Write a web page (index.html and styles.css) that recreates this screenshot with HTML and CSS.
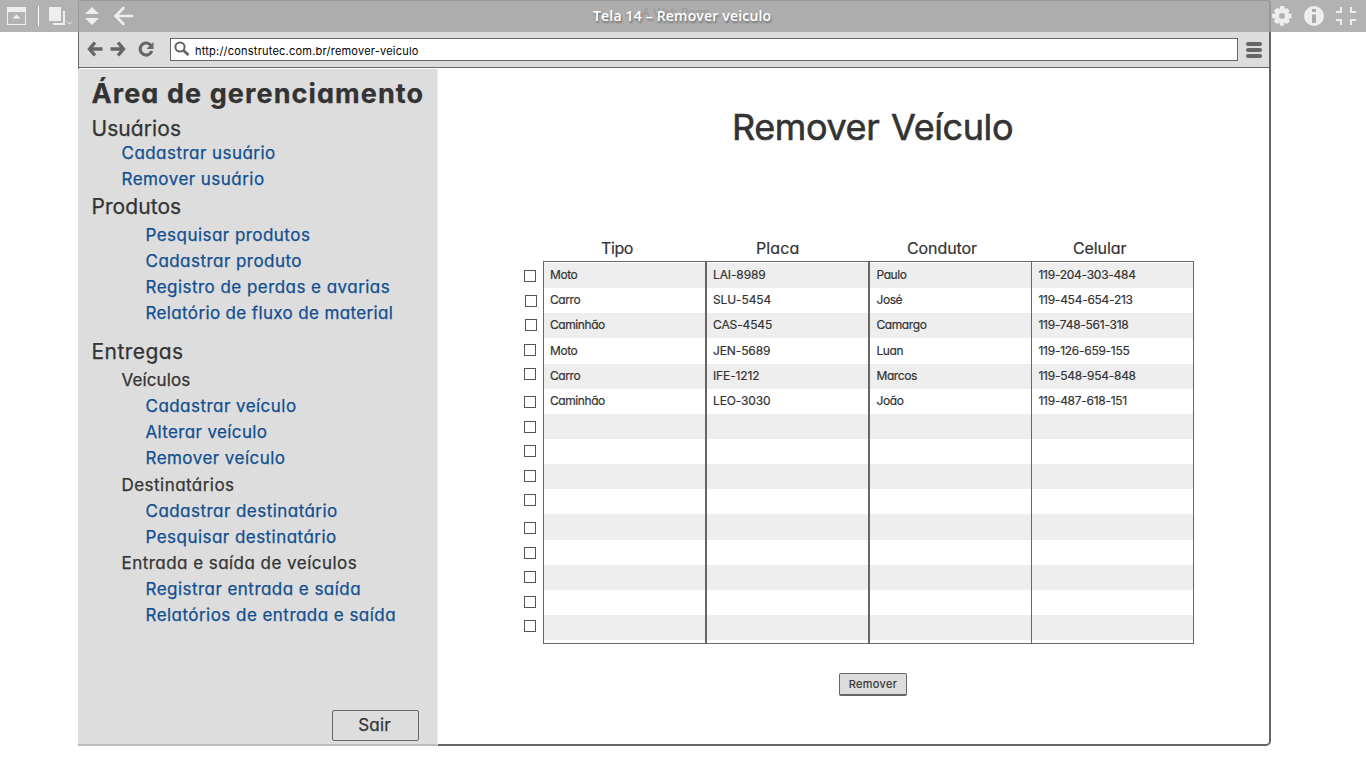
FILE: index.html
```
<!DOCTYPE html>
<html lang="pt-BR">
<head>
<meta charset="utf-8">
<title>Tela 14 – Remover veiculo</title>
<link rel="stylesheet" href="styles.css">
</head>
<body>
<header class="bar">
  <svg class="bar-left" width="140" height="32" viewBox="0 0 140 32" fill="#eee">
    <path d="M7 7h19v18H7zM8 12v12h17V12z" fill-rule="evenodd"/>
    <path d="M16.500 14.500l4 4h-8z"/>
    <path d="M38 6h1v20h-1z" fill="#fff"/>
    <path d="M49 7h12v14H49zM63 11h2v14H53v-2h10z"/>
    <path d="M67 21.500l2.500 2.500 2.500-2.500" fill="none" stroke="#eee"/>
    <path d="M92 7l7 7H85zM92 25l7-7H85z"/>
    <path d="M123.500 8l-8 8 8 8M116 16h16" fill="none" stroke="#eee" stroke-width="2.600" stroke-linecap="round"/>
  </svg>
  <h1 class="bar-title">Tela 14 – Remover veiculo</h1>
  <svg class="bar-right" width="100" height="32" viewBox="1266 0 100 32" fill="#eee">
    <path d="M1280.200 6h4l.6 2.900 2-.9 2.900 2.800-1.600 2.500 3.400.7v4l-3 .7 1.300 2.500-2.800 2.900-2.600-1.700-.7 3.300h-3.500l-.8-3.300-2.600 1.700-2.900-2.900 1.400-2.500-3.100-.7v-4l3.400-.7-1.700-2.500 2.900-2.800 2.800.9zM1282 13a3 3 0 1 0 0 6 3 3 0 0 0 0-6z" fill-rule="evenodd"/>
    <circle cx="1314" cy="16" r="10"/>
    <path d="M1312 9h4v3h-4zM1312 14.500h4V23h-4z" fill="#aaa"/>
    <path d="M1336 11h4V7h2v6h-6zM1350 7h2v4h4v2h-6zM1336 19h6v6h-2v-4h-4zM1350 19h6v2h-4v4h-2z"/>
  </svg>
</header>
<span class="page-name">A Web Page</span>
<main class="browser">
  <div class="toolbar">
    <svg class="nav" width="80" height="36" viewBox="79.500 31 80 36" fill="none" stroke="#666" stroke-width="3.400">
      <path d="M95.500 42.500L90 49l5.500 6.500M90 49h13M118.500 42.500L124 49l-5.500 6.500M124 49h-13"/>
      <path d="M151.500 45.500a6 6 0 1 0 .8 5.500" stroke-width="3.200"/>
      <path d="M154 42v7h-7z" fill="#666" stroke="none"/>
    </svg>
    <div class="url">
      <svg width="16" height="16" viewBox="0 0 16 16" fill="none" stroke="#666"><circle cx="6" cy="6" r="4.600" stroke-width="2"/><path d="M9.500 9.500l5 4.500" stroke-width="3"/></svg>
      <span>http://construtec.com.br/remover-veiculo</span>
    </div>
    <div class="menu"><i></i><i></i><i></i></div>
  </div>
  <div class="content">
    <nav class="side">
      <h2>Área de gerenciamento</h2>
      <h3>Usuários</h3>
      <a class="near">Cadastrar usuário</a>
      <a class="near">Remover usuário</a>
      <h3 class="gap-s">Produtos</h3>
      <a class="first">Pesquisar produtos</a>
      <a>Cadastrar produto</a>
      <a>Registro de perdas e avarias</a>
      <a class="snug">Relatório de fluxo de material</a>
      <h3 class="gap-l tracked">Entregas</h3>
      <h4 class="first tight">Veículos</h4>
      <a>Cadastrar veículo</a>
      <a class="snug">Alterar veículo</a>
      <a>Remover veículo</a>
      <h4 class="gap-xs">Destinatários</h4>
      <a>Cadastrar destinatário</a>
      <a>Pesquisar destinatário</a>
      <h4>Entrada e saída de veículos</h4>
      <a>Registrar entrada e saída</a>
      <a>Relatórios de entrada e saída</a>
      <button class="exit">Sair</button>
    </nav>
    <section class="panel">
      <h2 class="heading">Remover Veículo</h2>
      <div class="heads"><span>Tipo</span><span>Placa</span><span>Condutor</span><span>Celular</span></div>
      <div class="list">
        <div class="checks"><i></i><i></i><i></i><i></i><i></i><i></i><i></i><i></i><i></i><i></i><i></i><i></i><i></i><i></i><i></i></div>
        <div class="grid">
          <div class="col"><span>Moto</span><span>Carro</span><span>Caminhão</span><span>Moto</span><span>Carro</span><span>Caminhão</span></div>
          <div class="col codes"><span>LAI-8989</span><span>SLU-5454</span><span>CAS-4545</span><span>JEN-5689</span><span>IFE-1212</span><span>LEO-3030</span></div>
          <div class="col"><span>Paulo</span><span>José</span><span>Camargo</span><span>Luan</span><span>Marcos</span><span>João</span></div>
          <div class="col phones"><span>119-204-303-484</span><span>119-454-654-213</span><span>119-748-561-318</span><span>119-126-659-155</span><span>119-548-954-848</span><span>119-487-618-151</span></div>
        </div>
      </div>
      <button class="remove">Remover</button>
    </section>
  </div>
</main>
</body>
</html>
```
FILE: styles.css
```
* { box-sizing: border-box; }
body {
  margin: 0;
  height: 768px;
  overflow: hidden;
  background: #fff;
  color: #333;
  font-family: Inter, "Liberation Sans", sans-serif;
  font-feature-settings: "cv11";
}
h1, h2, h3, h4 { margin: 0; font-weight: 400; }
button { font: inherit; color: inherit; padding: 0; }

/* Presentation bar, translucent over the top of the browser frame */
.bar {
  position: absolute;
  inset: 0 0 auto 0;
  z-index: 2;
  height: 32px;
  display: flex;
  background: rgba(163, 163, 163, .84);
}
.bar-left, .bar-right { display: block; flex: none; }
.bar-right { margin-left: auto; }
.bar-title {
  margin-left: 453px;
  font: 600 14px/32px "Open Sans", "Noto Sans", sans-serif;
  letter-spacing: .18px;
  color: #fff;
  text-shadow: 1px 2px 2px rgba(0, 0, 0, .35);
}
.page-name {
  position: absolute;
  left: 642px;
  top: 5px;
  z-index: 1;
  font-size: 11.500px;
  line-height: 16px;
  color: #666;
}

.browser {
  width: 1193px;
  height: 746px;
  margin-left: 78px;
  border: solid #666;
  border-width: 1px 2px 2px 1px;
  border-radius: 4px 4px 5px 0;
  display: flex;
  flex-direction: column;
}
.toolbar {
  height: 67px;
  padding: 30px 7px 0 0;
  display: flex;
  align-items: flex-start;
  background: #ddd;
  border-bottom: 1px solid #666;
  border-radius: 3px 3px 0 0;
}
.nav { flex: none; }
.url {
  width: 1068px;
  height: 23px;
  margin: 7px 0 0 11px;
  padding: 0 3px;
  display: flex;
  align-items: center;
  gap: 5px;
  background: #fff;
  border: 1px solid #666;
  font-size: 11px;
  letter-spacing: .22px;
  color: #000;
}
.url span { padding-top: 2px; }
.url svg { margin-top: -2px; }
.menu { margin: 11px 0 0 8px; display: grid; gap: 2px; }
.menu i { width: 16px; height: 4px; border-radius: 2px; background: #666; }

.content { flex: 1; display: flex; min-height: 0; }
.side {
  width: 360px;
  height: 677px;
  margin: 1px 0 0 -1px;
  padding: 6px 0 0 13.500px;
  display: flex;
  flex-direction: column;
  background: #ddd;
  border-right: 1px solid #eee;
  border-bottom: 2px solid #bbb;
  -webkit-text-stroke: .25px;
}
.side h2 {
  margin-bottom: 4px;
  font-size: 27px;
  font-weight: 700;
  line-height: 38px;
  letter-spacing: 1.09px;
}
.side h3 {
  margin-bottom: -1px;
  font-size: 21px;
  line-height: 24px;
  letter-spacing: .07px;
}
.side h3.tracked { letter-spacing: .45px; }
.side a, .side h4 {
  padding-left: 54px;
  font-size: 17px;
  line-height: 26px;
  letter-spacing: .46px;
  color: #104e90;
}
.side a.snug { letter-spacing: .36px; }
.side h4 { color: #333; }
.side h4, .side a.near { padding-left: 30px; }
.side .tight { letter-spacing: .1px; }
.side .first { margin-top: 4px; }
.side .gap-xs { margin-top: 1px; }
.side .gap-s { margin-top: 3px; }
.side .gap-l { margin-top: 14px; }
.exit {
  width: 87px;
  height: 31px;
  margin: 82px 0 0 240.500px;
  padding: 0 2px 2px 0;
  border: 1px solid #666;
  border-radius: 2px;
  background: none;
  font-size: 17px;
  letter-spacing: .2px;
}

.panel {
  flex: 1;
  display: flex;
  flex-direction: column;
  -webkit-text-stroke: .2px;
}
.heading {
  margin: 35px 0 0 294px;
  font-size: 36px;
  line-height: 48px;
  letter-spacing: -.4px;
  word-spacing: 2px;
  -webkit-text-stroke: .6px;
}
.heads {
  width: 651px;
  margin: 85px 0 1px 105px;
  display: flex;
  font-size: 16px;
  line-height: 24px;
}
.heads span { letter-spacing: -.1px; }
.heads span:nth-child(1) { padding-left: 58px; width: 213px; letter-spacing: -.4px; }
.heads span:nth-child(2) { width: 151px; letter-spacing: .1px; }
.heads span:nth-child(3) { width: 166px; }
.list { display: flex; margin: 0 0 0 86px; }
.checks { width: 19px; padding-top: 9px; }
.checks i {
  display: block;
  width: 12px;
  height: 12px;
  margin: 0 0 13px;
  border: 1px solid #555;
}
.checks i:nth-child(2), .checks i:nth-child(3) { margin-left: 1px; }
.checks i:nth-child(2), .checks i:nth-child(7), .checks i:nth-child(9),
.checks i:nth-child(12), .checks i:nth-child(4) { margin-bottom: 12px; }
.checks i:nth-child(14) { margin-bottom: 12px; }
.checks i:nth-child(5) { margin-bottom: 16px; }
.checks i:nth-child(10) { margin-bottom: 16px; }
.grid {
  width: 651px;
  height: 383px;
  display: grid;
  grid-template-columns: 163px 163px 162px 1fr;
  border: 1px solid #666;
  background: repeating-linear-gradient(#eee 0 25.150px, #fff 25.150px 50.300px) 0 1px / 100% 378px no-repeat #fff;
}
.col {
  padding: 0 0 0 6px;
  border-right: 2px solid #666;
  font-size: 12px;
  line-height: 25.200px;
  letter-spacing: -.42px;
}
.col:nth-child(3) { border-right-width: 1px; padding-left: 6.500px; }
.col:last-child { border: 0; padding-left: 6.500px; }
.col span { display: block; }
.codes { letter-spacing: -.12px; }
.phones { letter-spacing: -.27px; }
.remove {
  width: 68px;
  height: 23px;
  margin: 28px 0 0 401px;
  border: 1px solid #666;
  border-bottom-width: 2px;
  border-radius: 2px;
  background: #ddd;
  font-size: 11px;
  letter-spacing: .35px;
}
```
